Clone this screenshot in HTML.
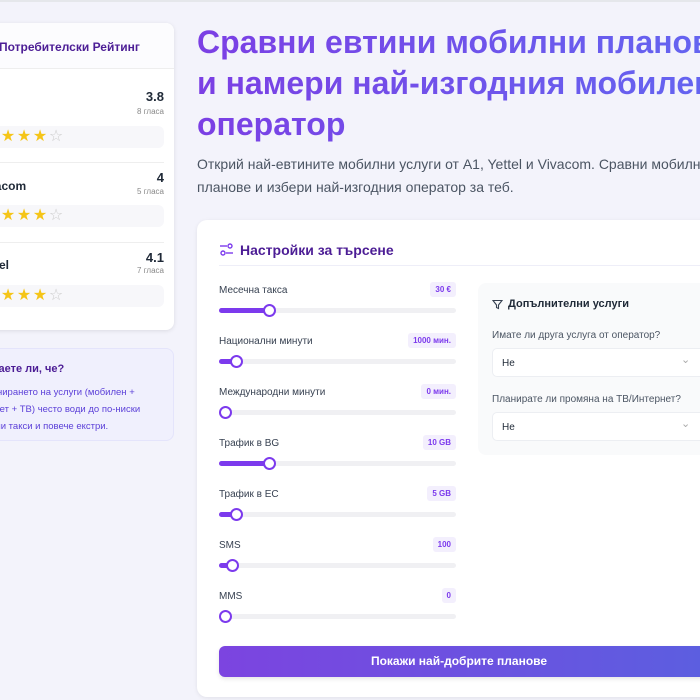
<!DOCTYPE html>
<html><head><meta charset="utf-8"><style>
*{box-sizing:border-box;margin:0;padding:0}
body{width:700px;height:700px;overflow:hidden;background:#f3f3fb;font-family:"Liberation Sans","DejaVu Sans",sans-serif;position:relative;color:#1f2937}
.top{position:absolute;left:0;top:0;width:700px;height:2px;background:#e5e7eb}
.side{position:absolute;left:-20px;top:23px;width:194px;height:307px;background:#fff;border-radius:8px;box-shadow:0 1px 4px rgba(0,0,0,.1)}
.side .hd{height:46px;border-bottom:1px solid #eee;padding:17px 0 0 19px;font-size:12px;font-weight:bold;color:#4c1d95;background:#fcfcfe;border-radius:8px 8px 0 0}
.row{position:absolute;left:0;width:194px}
.row .v{position:absolute;right:10px;font-size:13px;font-weight:bold;color:#1f2937}
.row .g{position:absolute;right:10px;font-size:8px;color:#888}
.row .n{position:absolute;left:20px;font-size:12px;font-weight:bold}
.row .st{position:absolute;left:0;width:184px;height:22px;background:#f7f7fa;border-radius:6px;font-size:16px;color:#f5c518;padding-left:4px;line-height:22px;letter-spacing:0px;overflow:hidden;white-space:nowrap}
.row .st i{display:inline-block;width:16px;font-style:normal;text-align:center}
.row .st i.e{color:#ccc}
.sep{position:absolute;left:0;width:184px;height:1px;background:#eee}
.tip{position:absolute;left:-20px;top:348px;width:194px;height:93px;background:#f0f0fd;border:1px solid #e4e4fb;border-radius:8px}
h1{position:absolute;left:197px;top:22px;font-size:32px;line-height:41px;font-weight:bold;white-space:nowrap;background:linear-gradient(90deg,#7b3fe4,#6366f1);-webkit-background-clip:text;color:transparent}
.sub{position:absolute;left:197px;top:153px;font-size:14px;line-height:23px;color:#4b5563;white-space:nowrap}
.card{position:absolute;left:197px;top:220px;width:520px;height:477px;background:#fff;border-radius:10px;box-shadow:0 1px 4px rgba(0,0,0,.08)}
.ct{position:absolute;left:240px;top:242px;font-size:14px;font-weight:bold;color:#4c1d95}
.dv{position:absolute;left:219px;top:265px;width:490px;height:1px;background:#eeeef8}
.sl{position:absolute;left:219px;width:237px}
.sl .l{position:absolute;left:0;top:-6px;font-size:10px;color:#374151}
.sl .b{position:absolute;right:0;top:-9px;font-size:8px;font-weight:bold;color:#7c3aed;background:#f3effd;border-radius:3px;padding:3px 5px}
.sl .t{position:absolute;left:0;top:17px;width:237px;height:5px;background:#f0f0f3;border-radius:3px}
.sl .f{position:absolute;left:0;top:17px;height:5px;background:#7c3aed;border-radius:3px}
.sl .k{position:absolute;top:13px;width:13px;height:13px;border:2px solid #7c3aed;background:#fff;border-radius:50%}
.pn{position:absolute;left:478px;top:283px;width:240px;height:172px;background:#f9fafb;border-radius:8px}
.sel{position:absolute;left:492px;width:220px;height:29px;background:#fff;border:1px solid #eceef2;border-radius:5px;font-size:10px;padding:9px 0 0 9px}
.sel::after{content:"⌄";position:absolute;left:188px;top:4px;color:#aaa;font-size:11px}
.lb{position:absolute;left:492px;font-size:10px;color:#4b5563}
.btn{position:absolute;left:219px;top:646px;width:500px;height:31px;border-radius:6px;background:linear-gradient(90deg,#7c44e0,#5b5fe0);color:#fff;font-size:12px;font-weight:bold;text-align:center;line-height:31px;padding-right:20px;box-shadow:0 2px 4px rgba(0,0,0,.1)}
</style></head><body>
<div class="top"></div>
<div class="side"><div class="hd">Потребителски Рейтинг</div>
<div class="row" style="top:47px"><div class="v" style="top:19px">3.8</div><div class="g" style="top:37px">8 гласа</div><div class="st" style="top:56px"><i>★</i><i>★</i><i>★</i><i>★</i><i class="e">☆</i></div></div>
<div class="sep" style="top:139px"></div>
<div class="row" style="top:140px"><div class="n" style="top:16px;left:-3px">Vivacom</div><div class="v" style="top:7px">4</div><div class="g" style="top:24px">5 гласа</div><div class="st" style="top:42px"><i>★</i><i>★</i><i>★</i><i>★</i><i class="e">☆</i></div></div>
<div class="sep" style="top:219px"></div>
<div class="row" style="top:220px"><div class="n" style="top:15px;left:-3px">Yettel</div><div class="v" style="top:7px">4.1</div><div class="g" style="top:23px">7 гласа</div><div class="st" style="top:42px"><i>★</i><i>★</i><i>★</i><i>★</i><i class="e">☆</i></div></div>
</div>
<div class="tip"><div style="position:absolute;left:4px;top:14px;font-size:11px;font-weight:bold;color:#4c1d95;white-space:nowrap">Знаете ли, че?</div>
<div style="position:absolute;left:-12px;top:35px;font-size:9.5px;line-height:17px;color:#5b3fd8;width:210px;white-space:nowrap">Комбинирането на услуги (мобилен +<br>интернет + ТВ) често води до по-ниски<br>месечни такси и повече екстри.</div></div>
<h1>Сравни евтини мобилни планове<br>и намери най-изгодния мобилен<br>оператор</h1>
<div class="sub">Открий най-евтините мобилни услуги от A1, Yettel и Vivacom. Сравни мобилни<br>планове и избери най-изгодния оператор за теб.</div>
<div class="card"></div>
<svg style="position:absolute;left:219px;top:242px" width="15" height="15" viewBox="0 0 15 15" fill="none" stroke="#7c3aed" stroke-width="1.4"><line x1="1" y1="4" x2="8" y2="4"/><circle cx="11" cy="4" r="2"/><line x1="7" y1="11" x2="14" y2="11"/><circle cx="4" cy="11" r="2"/></svg>
<div class="ct">Настройки за търсене</div>
<div class="dv"></div>
<div class="sl" style="top:291px"><div class="l">Месечна такса</div><div class="b">30 €</div><div class="t"></div><div class="f" style="width:52px"></div><div class="k" style="left:44px"></div></div>
<div class="sl" style="top:342px"><div class="l">Национални минути</div><div class="b">1000 мин.</div><div class="t"></div><div class="f" style="width:18px"></div><div class="k" style="left:11px"></div></div>
<div class="sl" style="top:393px"><div class="l">Международни минути</div><div class="b">0 мин.</div><div class="t"></div><div class="k" style="left:0"></div></div>
<div class="sl" style="top:444px"><div class="l">Трафик в BG</div><div class="b">10 GB</div><div class="t"></div><div class="f" style="width:52px"></div><div class="k" style="left:44px"></div></div>
<div class="sl" style="top:495px"><div class="l">Трафик в ЕС</div><div class="b">5 GB</div><div class="t"></div><div class="f" style="width:18px"></div><div class="k" style="left:11px"></div></div>
<div class="sl" style="top:546px"><div class="l">SMS</div><div class="b">100</div><div class="t"></div><div class="f" style="width:14px"></div><div class="k" style="left:7px"></div></div>
<div class="sl" style="top:597px"><div class="l">MMS</div><div class="b">0</div><div class="t"></div><div class="k" style="left:0"></div></div>
<div class="pn"></div>
<svg style="position:absolute;left:492px;top:299px" width="11" height="11" viewBox="0 0 11 11" fill="none" stroke="#374151" stroke-width="1.1"><path d="M1 1.5h9L6.5 6v3.5L4.5 8.5V6z"/></svg>
<div style="position:absolute;left:508px;top:298px;font-size:11px;font-weight:bold;color:#1f2937">Допълнителни услуги</div>
<div class="lb" style="top:330px">Имате ли друга услуга от оператор?</div>
<div class="sel" style="top:348px">Не</div>
<div class="lb" style="top:394px">Планирате ли промяна на ТВ/Интернет?</div>
<div class="sel" style="top:412px">Не</div>
<div class="btn">Покажи най-добрите планове</div>
</body></html>
